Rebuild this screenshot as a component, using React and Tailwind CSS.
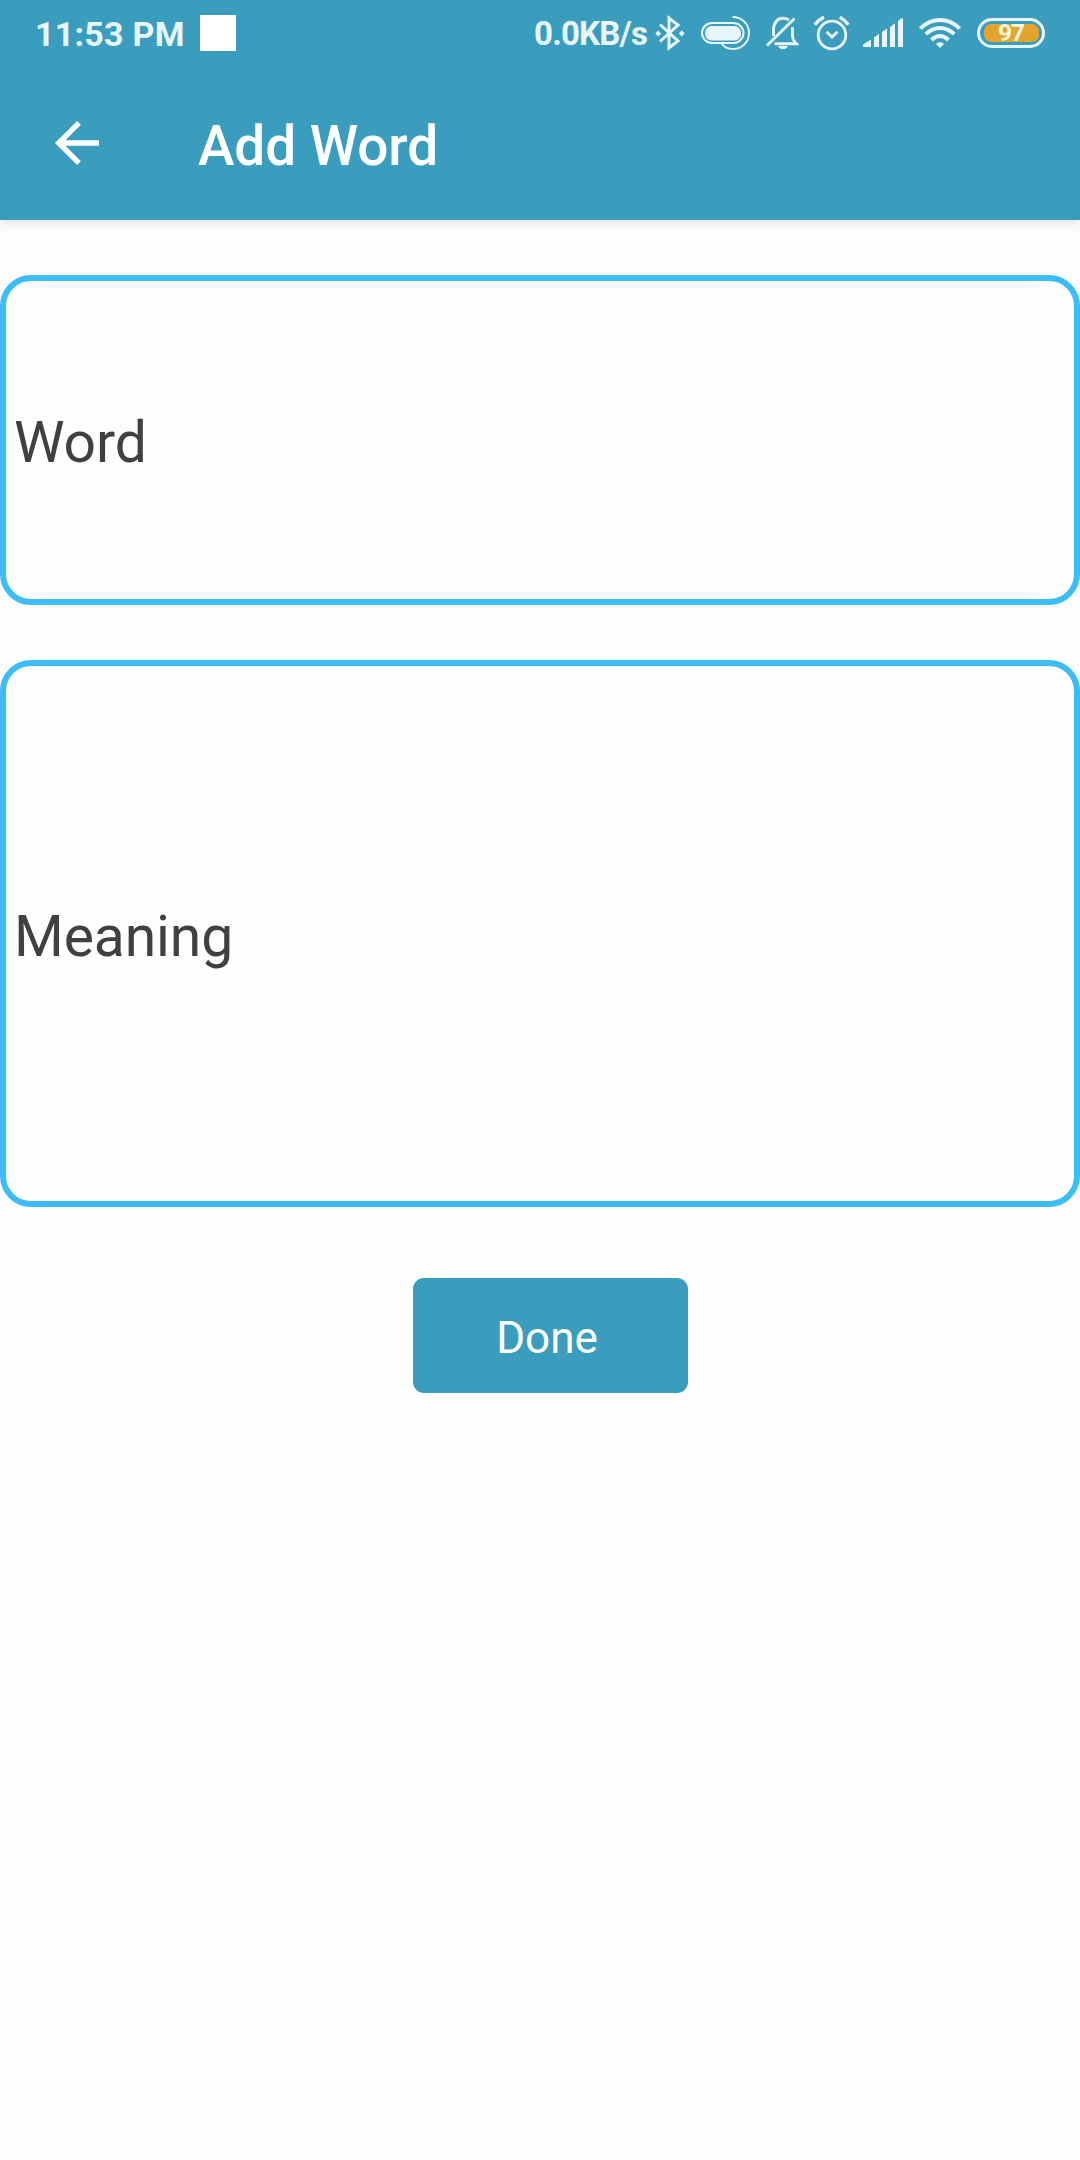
const ICON = '#e8f6fc';

function StatusBar() {
  return (
    <div className="flex h-[68px] items-center text-[#e8f6fc]">
      <span className="ml-[35px] w-[165px] whitespace-nowrap text-[34px] font-bold leading-[68px] tracking-[0.25px]">11:53 PM</span>
      <span className="mb-[2px] size-9 bg-white" />
      <div className="ml-[298px] flex h-[68px] items-center">
        <span className="w-[121px] whitespace-nowrap text-[33px] font-bold leading-[68px] tracking-[-0.8px]">0.0KB/s</span>
        {/* bluetooth */}
        <svg className="h-[68px] w-[30px]" viewBox="655 0 30 68" fill="none" stroke={ICON} strokeWidth="3">
          <path d="M660 24.5 L678 41 L669 48 V18 L678 25 L660 41.5" strokeLinejoin="miter" />
          <path d="M658.3 30.6l2.9 2.9-2.9 2.9-2.9-2.9zM681.7 30.6l2.9 2.9-2.9 2.9-2.9-2.9z" fill={ICON} stroke="none" />
        </svg>
        {/* connected device battery */}
        <svg className="ml-[15px] h-[68px] w-[52px]" viewBox="700 0 52 68" fill="none" stroke={ICON}>
          <rect x="702" y="23" width="41.5" height="20" rx="10" strokeWidth="2" />
          <rect x="705" y="26" width="36" height="14.5" rx="6.5" fill={ICON} stroke="none" />
          <path d="M732.5 17 C742 17 749 24 749 33 C749 42 742 49 733 49 C728 49 724 47 721.5 43.5" strokeWidth="1.9" />
        </svg>
        {/* muted bell */}
        <svg className="ml-[13px] h-[68px] w-[34px]" viewBox="765 0 34 68" fill="none" stroke={ICON} strokeWidth="2.9">
          <path d="M767 45.5 L794.5 18.5" />
          <path d="M773.5 36 V30 C773.5 22 778 18.3 783 18.3 C785.5 18.3 787.2 18.9 788.8 20" />
          <path d="M792.5 27 V35.5 C792.5 39 794 41.5 796.5 43.7 H774.5" />
          <path d="M778 46 H788 C787 48.1 785 49.2 783 49.2 S779 48.1 778 46z" fill={ICON} stroke="none" />
        </svg>
        {/* alarm */}
        <svg className="ml-[14px] h-[68px] w-[38px]" viewBox="813 0 38 68" fill="none" stroke={ICON}>
          <circle cx="832" cy="35" r="13.8" strokeWidth="2.8" />
          <path d="M826.5 31.7 L832 37 L837.5 31.7" strokeWidth="2.8" />
          <path d="M814.8 24.8 Q818.5 19.8 824 17.2 M839.8 17.2 Q845 19.8 848.2 24.8" strokeWidth="3.5" />
        </svg>
        {/* cellular signal */}
        <svg className="ml-[11px] h-[68px] w-[43px]" viewBox="862 0 43 68" fill={ICON}>
          <path d="M863 44.5 L871 39.5 V47 H863zM874 37.5 L879 33.7 V47 H874zM882 32 L887 28.5 V47 H882zM890 27.3 L895 23.3 V47 H890zM898 22 Q898 20.5 900 19.2 L903 18 V47 H898z" />
        </svg>
        {/* wifi */}
        <svg className="ml-[13px] h-[68px] w-[44px]" viewBox="918 0 44 68" fill="none" stroke={ICON} strokeWidth="3.9">
          <path d="M920.2 28.6 Q929 20 940 20 T959.8 28.6" />
          <path d="M925.8 34.2 Q932 28 940 28 T954.2 34.2" />
          <path d="M931.5 40 Q935.5 36 940 36 T948.5 40" />
          <path d="M936 44 Q940 40.2 944 44 L940 48z" fill={ICON} stroke="none" />
        </svg>
        {/* phone battery */}
        <div className="mb-[2px] ml-[15px] flex h-[30px] w-[68px] items-center justify-center rounded-full border-[3px] border-[#e8f6fc]">
          <div className="flex h-[18px] w-[55px] items-center justify-center rounded-[7px] bg-[#e2a42f]">
            <span className="text-[24.5px] font-bold leading-[18px] tracking-[-1px] text-[#fff6df]">97</span>
          </div>
        </div>
      </div>
    </div>
  );
}

function AppBar() {
  return (
    <div className="flex h-[152px] items-start">
      <svg className="ml-[54px] mt-[52px] size-12" viewBox="54 120 48 48" fill="none" stroke="white" strokeWidth="5.4">
        <path d="M99 143 H59 M79 122.8 L58.8 143 L79 163.2" />
      </svg>
      <h1 className="ml-[96px] mt-[43px] whitespace-nowrap text-[55px] font-medium leading-[70px] tracking-[-0.1px]">Add Word</h1>
    </div>
  );
}

export default function App() {
  return (
    <div className="flex min-h-[2160px] w-[1080px] flex-col bg-[#fefefe] font-['Roboto',sans-serif]">
      <header className="h-[220px] bg-[#3b9dbe] text-white shadow-[0_2px_11px_rgba(0,0,0,0.14)]">
        <StatusBar />
        <AppBar />
      </header>
      <main className="flex flex-col gap-[55px] pt-[55px]">
        <div className="flex h-[330px] items-center rounded-[31px] border-[6px] border-[#3dbcfa] pl-[8px] pt-[5px] text-[57px] tracking-[-0.1px] text-[#404040]">Word</div>
        <div className="flex h-[547px] items-center rounded-[31px] border-[6px] border-[#3dbcfa] pl-[8px] pt-[7px] text-[57px] tracking-[-0.1px] text-[#404040]">Meaning</div>
      </main>
      <button className="ml-[413px] mt-[71px] h-[115px] w-[275px] rounded-[11px] bg-[#3b9dbe] pr-[7px] pt-[5px] text-[44px] text-white">Done</button>
    </div>
  );
}
